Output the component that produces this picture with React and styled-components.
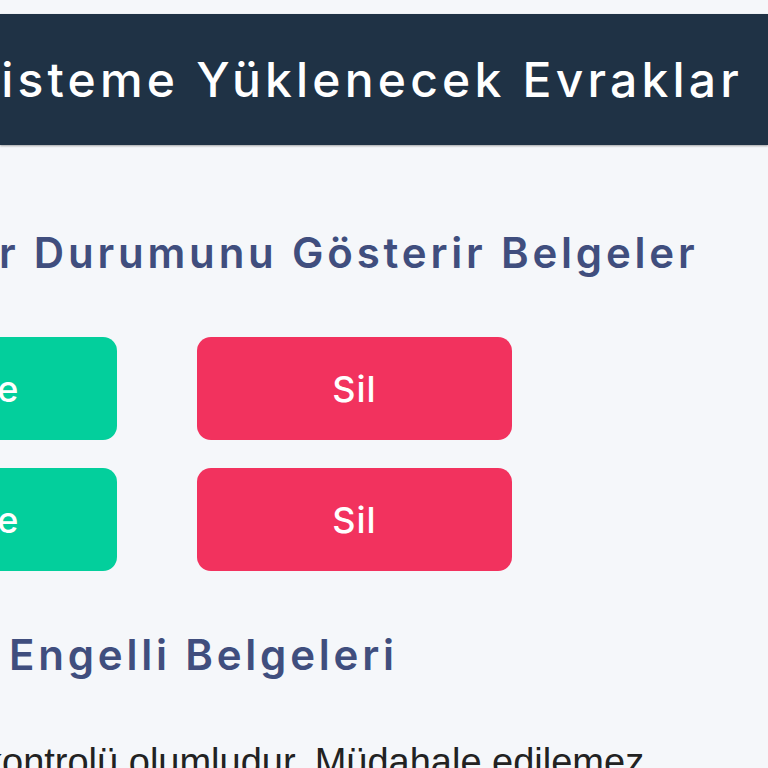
import React from "react";
import styled, { createGlobalStyle } from "styled-components";

const GlobalStyle = createGlobalStyle`
  html, body {
    margin: 0;
    padding: 0;
    background: #f5f7fa;
  }
  body {
    font-family: Inter, "Open Sans", sans-serif;
  }
`;

const Page = styled.div`
  width: 768px;
  height: 768px;
  overflow: hidden;
  padding-top: 14px;
  box-sizing: border-box;
  background: #f5f7fa;
`;

const Header = styled.header`
  height: 131px;
  background: #1f3245;
  display: flex;
  align-items: center;
  justify-content: flex-end;
  padding-right: 25px;
  overflow: hidden;
  box-shadow: 0 1px 2px rgba(0, 0, 0, 0.35);
`;

const HeaderTitle = styled.h1`
  margin: 0;
  white-space: nowrap;
  color: #ffffff;
  font-size: 48px;
  font-weight: 500;
  letter-spacing: 4.2px;
`;

const SectionTitle = styled.h2`
  margin: ${(p) => p.$top}px 0 0 ${(p) => p.$left}px;
  white-space: nowrap;
  color: #404e7e;
  font-size: 42px;
  font-weight: 600;
  letter-spacing: 3.8px;
  line-height: 50px;
`;

const ButtonGrid = styled.div`
  display: grid;
  grid-template-columns: 374px 315px;
  column-gap: 80px;
  row-gap: 28px;
  margin: 59px 0 0 -257px;
`;

const Button = styled.button`
  height: 103px;
  border: none;
  border-radius: 14px;
  background: ${(p) => (p.$kind === "danger" ? "#f2325e" : "#03cf9c")};
  color: #ffffff;
  font-family: Inter, "Open Sans", sans-serif;
  font-size: 36px;
  font-weight: 500;
  letter-spacing: 1px;
  display: flex;
  align-items: center;
  justify-content: center;
  padding: 0;
`;

const Notice = styled.p`
  margin: 60px 0 0 -17px;
  white-space: nowrap;
  color: #222222;
  font-family: "Liberation Sans", Arial, sans-serif;
  font-size: 38px;
  line-height: 44px;
`;

export default function App() {
  const rows = [1, 2];
  return (
    <>
      <GlobalStyle />
      <Page>
        <Header>
          <HeaderTitle>Sisteme Yüklenecek Evraklar</HeaderTitle>
        </Header>
        <SectionTitle $top={83} $left={-1}>
          r Durumunu Gösterir Belgeler
        </SectionTitle>
        <ButtonGrid>
          {rows.map((r) => (
            <React.Fragment key={r}>
              <Button $kind="view">Görüntüle</Button>
              <Button $kind="danger">Sil</Button>
            </React.Fragment>
          ))}
        </ButtonGrid>
        <SectionTitle $top={59} $left={9}>
          Engelli Belgeleri
        </SectionTitle>
        <Notice>kontrolü olumludur. Müdahale edilemez</Notice>
      </Page>
    </>
  );
}
